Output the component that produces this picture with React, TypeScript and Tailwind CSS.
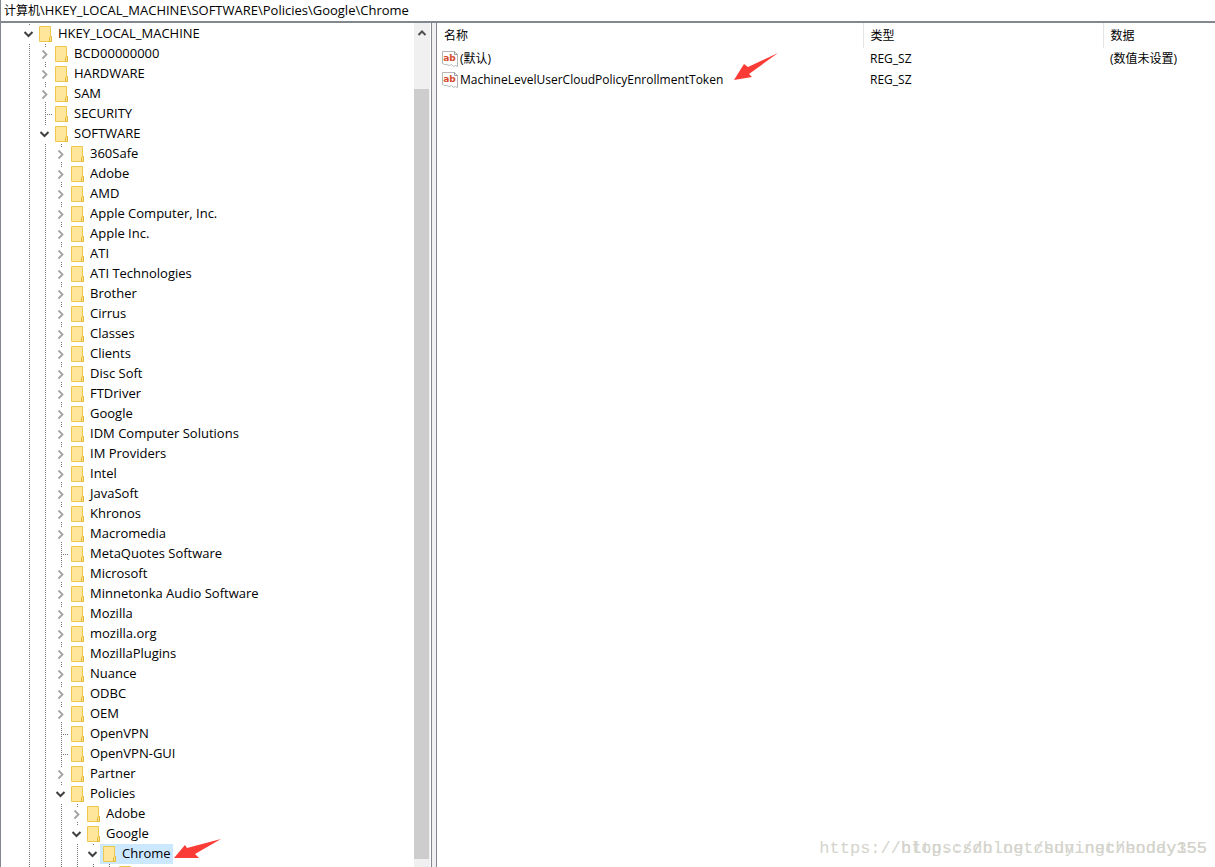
import React from "react";

type TreeItem = { name: string; depth: number; state: "open" | "closed" | "leaf"; selected?: boolean };

const closed = (depth: number, ...names: string[]): TreeItem[] =>
  names.map((name) => ({ name, depth, state: "closed" }));
const leaf = (depth: number, ...names: string[]): TreeItem[] =>
  names.map((name) => ({ name, depth, state: "leaf" }));
const open = (depth: number, name: string, selected = false): TreeItem => ({ name, depth, state: "open", selected });

const items: TreeItem[] = [
  open(0, "HKEY_LOCAL_MACHINE"),
  ...closed(1, "BCD00000000", "HARDWARE", "SAM"),
  ...leaf(1, "SECURITY"),
  open(1, "SOFTWARE"),
  ...closed(
    2,
    "360Safe", "Adobe", "AMD", "Apple Computer, Inc.", "Apple Inc.", "ATI", "ATI Technologies",
    "Brother", "Cirrus", "Classes", "Clients", "Disc Soft", "FTDriver", "Google",
    "IDM Computer Solutions", "IM Providers", "Intel", "JavaSoft", "Khronos", "Macromedia",
  ),
  ...leaf(2, "MetaQuotes Software"),
  ...closed(
    2,
    "Microsoft", "Minnetonka Audio Software", "Mozilla", "mozilla.org", "MozillaPlugins",
    "Nuance", "ODBC", "OEM",
  ),
  ...leaf(2, "OpenVPN", "OpenVPN-GUI"),
  ...closed(2, "Partner"),
  open(2, "Policies"),
  ...closed(3, "Adobe"),
  open(3, "Google"),
  open(4, "Chrome", true),
  ...leaf(5, ""),
];

function Folder() {
  return (
    <svg width="14" height="16" viewBox="0 0 14 16" className="shrink-0" aria-hidden="true">
      <path d="M.5.5h11v10h1v5H.5z" fill="#ffe69b" stroke="#edc84f" />
      <path d="M10.5 15.5v-4l1-1h1v5z" fill="#ffe28a" stroke="#e3b93b" />
    </svg>
  );
}

function Guide({ state }: { state?: TreeItem["state"] }) {
  return (
    <svg width="16" height="20" viewBox="0 0 16 20" className="shrink-0" aria-hidden="true">
      {(state === undefined || state === "leaf") && (
        <path d="M9.5 0v20" stroke="#777" strokeDasharray="1 1" />
      )}
      {state === "leaf" && <path d="M11 10.5h5" stroke="#777" strokeDasharray="1 1" />}
      {state === "closed" && (
        <>
          <path d="M9.5 0v3M9.5 18v2" stroke="#777" strokeDasharray="1 1" />
          <path d="M6.5 6.5l4 4-4 4" fill="none" stroke="#a3a3a3" strokeWidth="1.8" />
        </>
      )}
      {state === "open" && (
        <>
          <path d="M9.5 0v2" stroke="#777" strokeDasharray="1 1" />
          <path d="M4.5 8l4 4 4-4" fill="none" stroke="#404040" strokeWidth="2" />
        </>
      )}
    </svg>
  );
}

function StringIcon() {
  return (
    <svg width="16" height="16" viewBox="0 0 16 16" className="shrink-0" aria-hidden="true">
      <path d="M.5.5h12l3 3v12l-2-1-2 1-2-2-2 1-3-1-2 0-2-1z" fill="#fff" stroke="#b5b5b5" />
      <path d="M12.5.5v3h3" fill="none" stroke="#999" />
      <text x="7.5" y="10" textAnchor="middle" fontSize="9" fontWeight="700" fill="#d34b2c" fontFamily="DejaVu Sans, sans-serif">
        ab
      </text>
    </svg>
  );
}

function TreeArrow() {
  return (
    <svg width="50" height="24" viewBox="0 0 50 24" className="absolute left-full top-[-6px]" aria-hidden="true">
      <path d="M1 20 12 7l2 3L48 1 22 16l4 4z" fill="#fb3b35" />
    </svg>
  );
}

function ValueArrow() {
  return (
    <svg width="46" height="30" viewBox="0 0 46 30" className="absolute left-full top-[-18px] ml-2.5" aria-hidden="true">
      <path d="M1 28 11 12l4 3L45 1 16 22l3 3z" fill="#fb3b35" />
    </svg>
  );
}

function TreeRow({ item }: { item: TreeItem }) {
  return (
    <li className="flex h-5 shrink-0 items-center">
      {Array.from({ length: item.depth }, (_, i) => (
        <Guide key={i} />
      ))}
      <Guide state={item.state} />
      <button
        type="button"
        className={`relative flex h-5 items-center gap-[5px] whitespace-nowrap pl-[3px] pr-0.5 ${item.selected ? "bg-[#cce8ff]" : ""}`}
      >
        <Folder />
        <span className="pb-0.5">{item.name}</span>
        {item.selected && <TreeArrow />}
      </button>
    </li>
  );
}

const values = [
  { name: "(默认)", type: "REG_SZ", data: "(数值未设置)" },
  { name: "MachineLevelUserCloudPolicyEnrollmentToken", type: "REG_SZ", data: "", marked: true },
];

export default function App() {
  return (
    <div className="relative flex h-screen flex-col overflow-hidden border-l border-[#828790] bg-white font-['Open_Sans','Noto_Sans_CJK_SC',sans-serif] text-[13px] leading-5 text-black">
      <header className="h-[23px] shrink-0 border-b-2 border-[#828790] pl-[3px]">
        <span className="text-xs">计算机</span>\HKEY_LOCAL_MACHINE\SOFTWARE\Policies\Google\Chrome
      </header>
      <main className="flex min-h-0 flex-1">
        <nav className="flex w-[431px] shrink-0 border-r border-[#828790]">
          <ul className="flex min-w-0 flex-1 flex-col overflow-hidden pl-[19px] pt-px">
            {items.map((item, i) => (
              <TreeRow key={i} item={item} />
            ))}
          </ul>
          <div className="mr-px flex w-4 shrink-0 flex-col bg-[#f0f0f0] pb-2">
            <button type="button" aria-label="Scroll up" className="flex h-[66px] items-start justify-center pt-1.5">
              <svg width="10" height="8" viewBox="0 0 10 8" aria-hidden="true">
                <path d="M1.5 6 5 2.5 8.5 6" fill="none" stroke="#505050" strokeWidth="2" />
              </svg>
            </button>
            <div className="mr-px flex-1 bg-[#cdcdcd]" />
          </div>
        </nav>
        <div className="w-1 shrink-0 bg-[#f0f0f0]" />
        <section className="min-w-0 flex-1 border-l border-[#828790]">
          <table className="w-full table-fixed border-collapse text-left text-xs leading-5">
            <colgroup>
              <col className="w-[426px]" />
              <col className="w-60" />
              <col />
            </colgroup>
            <thead>
              <tr className="h-[25px]">
                <th className="border-r border-[#e5e5e5] p-0 pl-[7px] pt-px font-normal">名称</th>
                <th className="border-r border-[#e5e5e5] p-0 pl-[7px] pt-px font-normal">类型</th>
                <th className="p-0 pl-[7px] pt-px font-normal">数据</th>
              </tr>
            </thead>
            <tbody>
              {values.map((v) => (
                <tr key={v.name} className="h-[21px]">
                  <td className="p-0 pl-[5px]">
                    <div className="flex items-center gap-0.5">
                      <StringIcon />
                      <span className="relative">
                        {v.name}
                        {v.marked && <ValueArrow />}
                      </span>
                    </div>
                  </td>
                  <td className="p-0 pl-[7px]">{v.type}</td>
                  <td className="p-0 pl-[7px]">{v.data}</td>
                </tr>
              ))}
            </tbody>
          </table>
        </section>
      </main>
      <div className="pointer-events-none absolute bottom-1.5 right-2 grid justify-items-end font-['Liberation_Mono',monospace] text-[17px] leading-6 text-[#d4d4cc]">
        <span className="col-start-1 row-start-1">https://blog.csdn.net/huyingchenday355</span>
        <span className="col-start-1 row-start-1">https://blog.csdn.net/hoddy155</span>
      </div>
    </div>
  );
}
